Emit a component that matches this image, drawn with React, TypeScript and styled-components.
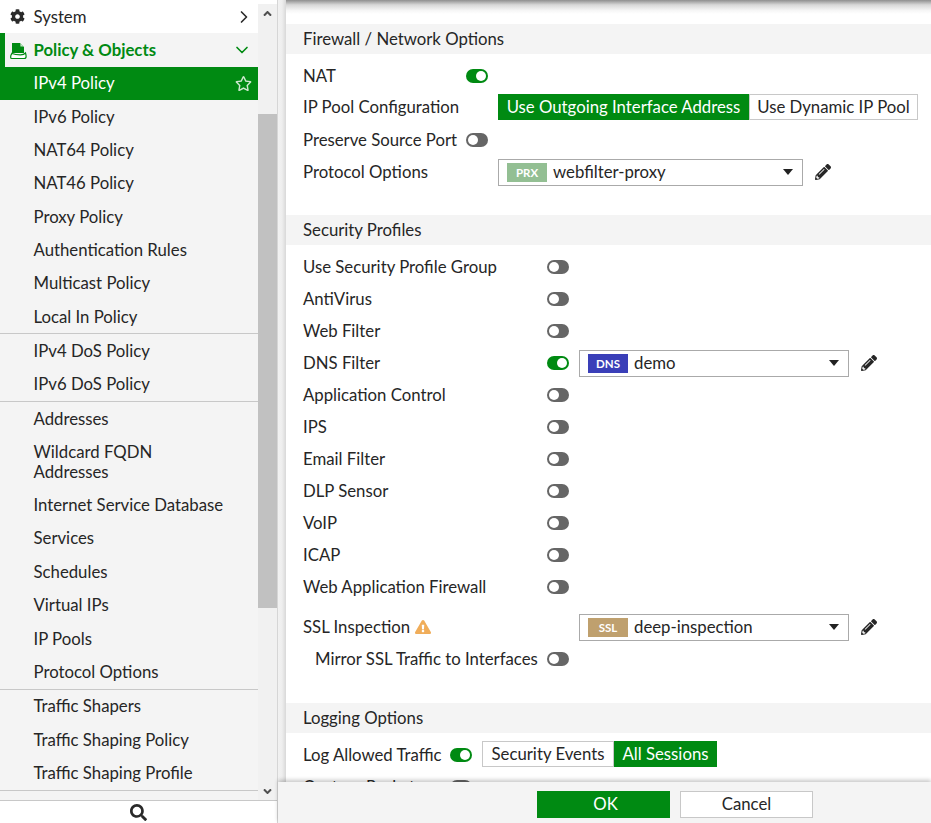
import React from "react";
import styled, { createGlobalStyle } from "styled-components";
import { FaCog, FaSearch, FaRegStar, FaPencilAlt, FaExclamationTriangle, FaAngleDown, FaAngleUp } from "react-icons/fa";
import { ChevronDown, ChevronRight } from "lucide-react";

const GREEN = "#008a12";

const Global = createGlobalStyle`
  html, body { margin: 0; padding: 0; background: #fff; }
  body { font-family: "Lato", "Liberation Sans", sans-serif; font-size: 16.75px; color: #262626; overflow: hidden; font-variant-ligatures: common-ligatures; text-rendering: optimizeLegibility; }
  * { box-sizing: border-box; }
`;

const Page = styled.div`display: flex; width: 931px; height: 823px; overflow: hidden;`;
const Sidebar = styled.aside`display: flex; flex-direction: column; width: 278px; height: 823px; border-right: 1px solid #d6d6d6; flex: none;`;
const MenuWrap = styled.div`display: flex; flex: none; height: 800px; overflow: hidden;`;
const Menu = styled.nav`width: 258px; flex: none; background: #f4f4f4; height: 800px; overflow: hidden;`;
const Row = styled.div<{ $h?: number; $kind?: string }>`
  display: flex; align-items: center; height: ${p => p.$h ?? 33.345}px; padding: 0 6px 0 33.5px;
  line-height: 20px; position: relative;
  ${p => p.$kind === "top" && `background:#fff;`}
  ${p => p.$kind === "active" && `background:${GREEN};color:#fff;`}
  ${p => p.$kind === "group" && `color:${GREEN};font-weight:700;border-left:5px solid ${GREEN};padding-left:28.5px;`}
`;
const Label = styled.span`flex: 1;`;
const MainIcon = styled.span`position: absolute; left: 10px; top: 9px; display: flex; color: #2a2a2a;`;
const GroupIcon = styled.span`position: absolute; left: 5px; top: 8px; display: flex;`;
const Trail = styled.span<{ $c?: string; $mr?: number }>`display: flex; align-items: center; color: ${p => p.$c ?? "#2a2a2a"}; margin-right: ${p => p.$mr ?? 0}px;`;
const Divider = styled.div`height: 1px; background: #c8c8c8;`;
const Track = styled.div`width: 19px; background: #f1f1f1; display: flex; flex-direction: column; flex: none; height: 796px; margin-top: 4px;`;
const Arrow = styled.div<{ $h: number }>`height: ${p => p.$h}px; display: flex; align-items: center; justify-content: center; color: #505050; flex: none;`;
const Thumb = styled.div`height: 494px; margin-top: 91px; background: #c1c1c1; flex: none;`;
const Spacer = styled.div`flex: 1;`;
const SearchBar = styled.div`height: 23px; border-top: 1px solid #c8c8c8; display: flex; align-items: center; justify-content: center; background: #fff; color: #2a2a2a; padding-right: 1px;`;

const Gutter = styled.div`width: 8px; flex: none; background: linear-gradient(to right, #f2f2f2, #eeeeee 50%, #d8d8d8); height: 782px;`;
const Main = styled.main`flex: 1; display: flex; flex-direction: column; height: 823px; min-width: 0;`;
const Upper = styled.div`display: flex; height: 782px; overflow: hidden; flex: none;`;
const Content = styled.div`flex: 1; height: 782px; overflow: hidden; padding-top: 24px; background: #fff; position: relative;`;
const TopShadow = styled.div`position: absolute; left: 0; right: 0; top: 0; height: 14px; background: linear-gradient(to bottom, #8f8f8f, #d8d8d8 35%, #f6f6f6 75%, #fff);`;
const Section = styled.div<{ $mt?: number }>`height: 30px; background: #f4f4f4; padding-left: 17px; display: flex; align-items: center; line-height: 20px; margin-top: ${p => p.$mt ?? 0}px;`;
const FormRow = styled.div<{ $h?: number; $mt?: number }>`display: flex; align-items: center; height: ${p => p.$h ?? 32}px; padding-left: 17px; margin-top: ${p => p.$mt ?? 0}px;`;
const Name = styled.div<{ $w?: number; $indent?: number }>`width: ${p => p.$w ?? 163}px; flex: none; display: flex; align-items: center; padding: 0 0 1px ${p => p.$indent ?? 0}px; white-space: nowrap;`;
const Toggle = styled.span<{ $on?: boolean }>`
  width: 22px; height: 14px; border-radius: 7px; flex: none; display: flex; align-items: center; padding: 0 2px;
  background: ${p => (p.$on ? GREEN : "#666")}; justify-content: ${p => (p.$on ? "flex-end" : "flex-start")};
  &::after { content: ""; width: 10px; height: 10px; border-radius: 50%; background: #fff; }
`;
const Seg = styled.span<{ $on?: boolean; $w: number }>`
  width: ${p => p.$w}px; height: 26px; display: flex; align-items: center; justify-content: center; white-space: nowrap; flex: none; padding-bottom: 1px;
  background: ${p => (p.$on ? GREEN : "#fff")}; color: ${p => (p.$on ? "#fff" : "#262626")}; border: 1px solid ${p => (p.$on ? GREEN : "#c8c8c8")};
`;
const Segs = styled.div<{ $ml?: number; $mb?: number }>`display: flex; margin-left: ${p => p.$ml ?? 0}px; margin-bottom: ${p => p.$mb ?? 0}px;`;
const Select = styled.div<{ $w: number; $ml?: number }>`width: ${p => p.$w}px; height: 27px; border: 1px solid #aaa; display: flex; align-items: center; padding: 0 9px 0 8px; flex: none; margin-left: ${p => p.$ml ?? 0}px;`;
const Tag = styled.span<{ $bg: string; $w: number }>`width: ${p => p.$w}px; height: 19px; background: ${p => p.$bg}; color: #fff; font-size: 11.5px; font-weight: 700; display: flex; align-items: center; justify-content: center; margin-right: 6px; flex: none;`;
const Val = styled.span`flex: 1; padding-bottom: 1px;`;
const Caret = styled.span`width: 0; height: 0; border-left: 5.5px solid transparent; border-right: 5.5px solid transparent; border-top: 6px solid #222;`;
const Pencil = styled.span`display: flex; margin-left: 12px; color: #262626;`;
const Warn = styled.span`display: flex; margin-left: 5px; color: #f0ad5a;`;
const Footer = styled.footer`height: 41px; background: #f4f4f4; display: flex; align-items: flex-start; padding: 9px 0 0 259px; gap: 10px; flex: none; box-shadow: 0 -2px 4px rgba(0,0,0,.22); position: relative;`;
const Btn = styled.button<{ $primary?: boolean }>`
  width: 133px; height: 27px; font: inherit; display: flex; align-items: center; justify-content: center; padding: 0 0 2px ${p => (p.$primary ? 4 : 0)}px;
  background: ${p => (p.$primary ? GREEN : "#fff")}; color: ${p => (p.$primary ? "#fff" : "#262626")}; border: 1px solid ${p => (p.$primary ? GREEN : "#c8c8c8")};
`;

const PolicyIcon = () => (
  <svg width="17" height="19" viewBox="0 0 17 19">
    <path d="M2 2h8l4 4v6H2z" fill={GREEN} />
    <path d="M10.4 2.2v3.4h3.4z" fill="#bfe3c4" />
    <path d="M2.2 11.5C2 13 .7 13.5.7 15.5v1c0 .7.5 1 1 1h12.6c.8 0 1.8-.8 1.8-2 0-1-.3-2.5-.6-3.5-1 1.2-3 1.8-5 1.8-3 0-5.5 0-8.3-1.3z" fill="#fff" stroke={GREEN} strokeWidth="1.2" />
  </svg>
);

const Item = ({ t, h }: { t: React.ReactNode; h?: number }) => <Row $h={h}><Label>{t}</Label></Row>;
const ToggleRow = ({ t }: { t: string }) => <FormRow><Name $w={244}>{t}</Name><Toggle /></FormRow>;

export default function App() {
  return (
    <Page>
      <Global />
      <Sidebar>
        <MenuWrap>
          <Menu>
            <Row $kind="top"><MainIcon><FaCog size={15} /></MainIcon><Label>System</Label><Trail $mr={-2}><ChevronRight size={20} strokeWidth={2} /></Trail></Row>
            <Row $kind="group"><GroupIcon><PolicyIcon /></GroupIcon><Label>Policy &amp; Objects</Label><Trail $c={GREEN}><ChevronDown size={20} strokeWidth={2} /></Trail></Row>
            <Row $kind="active"><Label>IPv4 Policy</Label><Trail $c="#cfe8d0"><FaRegStar size={17} /></Trail></Row>
            <Item t="IPv6 Policy" />
            <Item t="NAT64 Policy" />
            <Item t="NAT46 Policy" />
            <Item t="Proxy Policy" />
            <Item t="Authentication Rules" />
            <Item t="Multicast Policy" />
            <Item t="Local In Policy" />
            <Divider />
            <Item t="IPv4 DoS Policy" />
            <Item t="IPv6 DoS Policy" />
            <Divider />
            <Item t="Addresses" />
            <Item t={<>Wildcard FQDN<br />Addresses</>} h={53} />
            <Item t="Internet Service Database" />
            <Item t="Services" />
            <Item t="Schedules" />
            <Item t="Virtual IPs" />
            <Item t="IP Pools" />
            <Item t="Protocol Options" />
            <Divider />
            <Item t="Traffic Shapers" />
            <Item t="Traffic Shaping Policy" />
            <Item t="Traffic Shaping Profile" />
            <Divider />
            <Item t="Virtual Servers" />
          </Menu>
          <Track>
            <Arrow $h={19}><FaAngleUp size={13} /></Arrow>
            <Thumb />
            <Spacer />
            <Arrow $h={17}><FaAngleDown size={13} /></Arrow>
          </Track>
        </MenuWrap>
        <SearchBar><FaSearch size={17} /></SearchBar>
      </Sidebar>
      <Main>
        <Upper>
          <Gutter />
          <Content>
            <TopShadow />
            <Section>Firewall / Network Options</Section>
            <FormRow $mt={6}><Name>NAT</Name><Toggle $on /></FormRow>
            <FormRow $h={30}>
              <Name $w={195}>IP Pool Configuration</Name>
              <Segs><Seg $on $w={251}>Use Outgoing Interface Address</Seg><Seg $w={169}>Use Dynamic IP Pool</Seg></Segs>
            </FormRow>
            <FormRow $mt={2}><Name>Preserve Source Port</Name><Toggle /></FormRow>
            <FormRow>
              <Name $w={195}>Protocol Options</Name>
              <Select $w={305}><Tag $bg="#93bf93" $w={40}>PRX</Tag><Val>webfilter-proxy</Val><Caret /></Select>
              <Pencil><FaPencilAlt size={16} /></Pencil>
            </FormRow>
            <Section $mt={27}>Security Profiles</Section>
            <FormRow $mt={6}><Name $w={244}>Use Security Profile Group</Name><Toggle /></FormRow>
            <ToggleRow t="AntiVirus" />
            <ToggleRow t="Web Filter" />
            <FormRow>
              <Name $w={244}>DNS Filter</Name><Toggle $on />
              <Select $w={270} $ml={10}><Tag $bg="#3a3fb8" $w={40}>DNS</Tag><Val>demo</Val><Caret /></Select>
              <Pencil><FaPencilAlt size={16} /></Pencil>
            </FormRow>
            <ToggleRow t="Application Control" />
            <ToggleRow t="IPS" />
            <ToggleRow t="Email Filter" />
            <ToggleRow t="DLP Sensor" />
            <ToggleRow t="VoIP" />
            <ToggleRow t="ICAP" />
            <ToggleRow t="Web Application Firewall" />
            <FormRow $mt={8}>
              <Name $w={276}>SSL Inspection<Warn><FaExclamationTriangle size={16} /></Warn></Name>
              <Select $w={270}><Tag $bg="#bfa06e" $w={40}>SSL</Tag><Val>deep-inspection</Val><Caret /></Select>
              <Pencil><FaPencilAlt size={16} /></Pencil>
            </FormRow>
            <FormRow><Name $w={244} $indent={12}>Mirror SSL Traffic to Interfaces</Name><Toggle /></FormRow>
            <Section $mt={28}>Logging Options</Section>
            <FormRow $h={44}>
              <Name $w={147}>Log Allowed Traffic</Name><Toggle $on />
              <Segs $ml={10} $mb={2}><Seg $w={132}>Security Events</Seg><Seg $on $w={103}>All Sessions</Seg></Segs>
            </FormRow>
            <FormRow $h={20}><Name $w={147}>Capture Packets</Name><Toggle /></FormRow>
          </Content>
        </Upper>
        <Footer>
          <Btn $primary>OK</Btn>
          <Btn>Cancel</Btn>
        </Footer>
      </Main>
    </Page>
  );
}
